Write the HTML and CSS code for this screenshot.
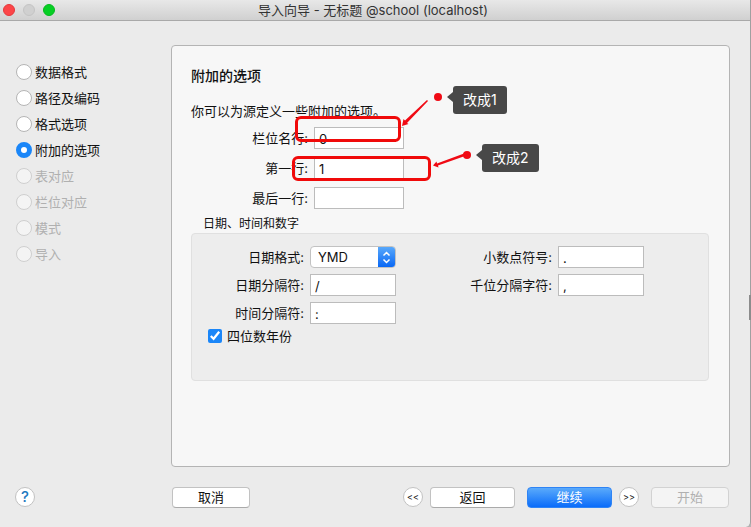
FILE: index.html
```html
<!DOCTYPE html>
<html lang="zh-CN">
<head>
    <meta charset="utf-8">
    <title>导入向导</title>
    <link rel="stylesheet" href="styles.css">
</head>
<body>
<div class="window">

    <!-- Title bar -->
    <header class="titlebar">
        <div class="lights">
            <button class="light red" aria-label="关闭"></button>
            <button class="light gray" aria-label="最小化"></button>
            <button class="light green" aria-label="缩放"></button>
        </div>
        <span class="title">导入向导 - 无标题 @school (localhost)</span>
    </header>

    <main class="main">
        <!-- Wizard steps -->
        <nav class="steps">
            <label class="step"><input type="radio" name="step">数据格式</label>
            <label class="step"><input type="radio" name="step">路径及编码</label>
            <label class="step"><input type="radio" name="step">格式选项</label>
            <label class="step"><input type="radio" name="step" checked>附加的选项</label>
            <label class="step off"><input type="radio" name="step" disabled>表对应</label>
            <label class="step off"><input type="radio" name="step" disabled>栏位对应</label>
            <label class="step off"><input type="radio" name="step" disabled>模式</label>
            <label class="step off"><input type="radio" name="step" disabled>导入</label>
        </nav>

        <section class="panel">
            <h1>附加的选项</h1>
            <p class="intro">你可以为源定义一些附加的选项。</p>

            <div class="rows">
                <label for="field-row">栏位名行:</label>
                <input type="text" id="field-row" value="0">
                <label for="first-row">第一行:</label>
                <input type="text" id="first-row" value="1">
                <label for="last-row">最后一行:</label>
                <input type="text" id="last-row">
            </div>

            <h2>日期、时间和数字</h2>
            <div class="group">
                <div class="columns">
                    <div class="formats">
                        <label for="date-format">日期格式:</label>
                        <div class="select">
                            <select id="date-format">
                                <option>YMD</option>
                                <option>MDY</option>
                                <option>DMY</option>
                            </select>
                            <span class="arrows">
                                <svg width="9" height="13" viewBox="0 0 9 13"><path d="M1.5 4.5l3-3 3 3M1.5 8.5l3 3 3-3"/></svg>
                            </span>
                        </div>
                        <label for="date-sep">日期分隔符:</label>
                        <input type="text" id="date-sep" value="/">
                        <label for="time-sep">时间分隔符:</label>
                        <input type="text" id="time-sep" value=":">
                    </div>
                    <div class="formats">
                        <label for="decimal">小数点符号:</label>
                        <input type="text" id="decimal" value=".">
                        <label for="thousand">千位分隔字符:</label>
                        <input type="text" id="thousand" value=",">
                    </div>
                </div>
                <label class="check"><input type="checkbox" checked>四位数年份</label>
            </div>

            <!-- Notes drawn over the form -->
            <div class="mark mark-one"></div>
            <div class="mark mark-two"></div>
            <svg class="pointers" width="120" height="90" viewBox="0 0 120 90">
                <path d="M37 10L38 11L17 33L18.500 34L12 36L13.500 29L15 30.500Z"/>
                <circle cx="48" cy="7" r="4"/>
                <path d="M74 63.500L75 66L48 75.500L48.500 77.500L43 75.500L46.500 71.500L47 73.500Z"/>
                <circle cx="77" cy="65" r="4"/>
            </svg>
            <div class="note note-one">改成1</div>
            <div class="note note-two">改成2</div>
        </section>
    </main>

    <footer class="footer">
        <div class="help-area"><button class="round help">?</button></div>
        <button class="btn cancel">取消</button>
        <div class="actions">
            <button class="round">&lt;&lt;</button>
            <button class="btn back">返回</button>
            <button class="btn primary">继续</button>
            <button class="round">&gt;&gt;</button>
            <button class="btn start" disabled>开始</button>
        </div>
    </footer>
    <span class="edge-handle"></span>
</div>
</body>
</html>
```

FILE: styles.css
```css
* {
    box-sizing: border-box;
}
body {
    margin: 0;
    background: #b4b4b4;
    color: #111;
    font-family: Inter, "Noto Sans CJK SC", sans-serif;
    font-size: 13px;
    line-height: 20px;
}
input, select, button {
    margin: 0;
    font: inherit;
    color: inherit;
}
.window {
    position: relative;
    display: flex;
    flex-direction: column;
    min-height: 100vh;
    background: #ebebeb;
    border-right: 1px solid #a0a0a0;
    border-bottom-right-radius: 5px;
}
.edge-handle {
    position: absolute;
    top: 56%;
    right: -1px;
    width: 2px;
    height: 25px;
    background: #8c8c8c;
}

/* title bar */
.titlebar {
    display: flex;
    align-items: center;
    height: 21px;
    padding-right: 7px;
    background: linear-gradient(#e8e8e8, #d0d0d0);
    border-bottom: 1px solid #a9a9a9;
}
.lights {
    display: flex;
    flex: 1;
    gap: 8px;
    padding-left: 3px;
}
.light {
    width: 12px;
    height: 12px;
    padding: 0;
    border: 1px solid #c4c4c4;
    border-radius: 50%;
    background: #d0d0d0;
}
.light.red {
    background: #fc4548;
    border-color: #e4383b;
}
.light.green {
    background: #06cf24;
    border-color: #05b91e;
}
.title {
    color: #333;
}
.titlebar::after {
    content: "";
    flex: 1;
}

/* steps */
.main {
    display: flex;
    flex: 1;
    padding: 24px 20px 0 16px;
}
.steps {
    display: flex;
    flex-direction: column;
    width: 155px;
    padding-top: 14px;
}
.step {
    display: flex;
    align-items: center;
    gap: 3px;
    height: 26px;
}
.step input {
    appearance: none;
    width: 16px;
    height: 16px;
    border: 1px solid #b5b5b5;
    border-radius: 50%;
    background: #fff;
}
.step input:checked {
    border: 5px solid #1a86f8;
}
.step.off {
    color: #b0b0b0;
}
.step.off input {
    border-color: #cfcfcf;
    background: #f4f4f4;
}

/* panel */
.panel {
    position: relative;
    flex: 1;
    padding: 20px 20px 0 19px;
    background: #f7f7f7;
    border: 1px solid #b4b4b4;
    border-radius: 4px;
}
h1 {
    margin: 0;
    font-size: 14px;
    font-weight: 500;
}
.intro {
    margin: 15px 0 6px;
}
.rows {
    display: grid;
    grid-template-columns: 117px 90px;
    gap: 8px 6px;
}
.rows label,
.formats label {
    line-height: 22px;
    text-align: right;
}
input[type="text"] {
    width: 100%;
    height: 22px;
    padding: 2px 4px 0;
    border: 1px solid #bcbcbc;
    background: #fff;
}
h2 {
    margin: 6px 0 0 12px;
    font-size: 12px;
    font-weight: 400;
    line-height: 18px;
}
.group {
    height: 148px;
    padding: 12px 16px 0;
    background: #ededed;
    border: 1px solid #e0e0e0;
    border-radius: 4px;
}
.columns {
    display: flex;
    gap: 60px;
}
.formats {
    display: grid;
    grid-template-columns: 96px 86px;
    grid-auto-rows: 22px;
    gap: 6px;
}

/* drop-down */
.select {
    display: flex;
    overflow: hidden;
    border: 1px solid #c2c2c2;
    border-radius: 4px;
    background: #fff;
}
.select select {
    appearance: none;
    flex: 1;
    min-width: 0;
    padding: 0 7px;
    border: 0;
    background: none;
}
.arrows {
    display: flex;
    align-items: center;
    justify-content: center;
    width: 17px;
    background: linear-gradient(#58a8fb, #0a68f5);
    pointer-events: none;
}
.arrows svg {
    fill: none;
    stroke: #fff;
    stroke-width: 1.5;
}
.check {
    display: flex;
    align-items: center;
    gap: 5px;
    margin-top: 2px;
}
.check input {
    width: 14px;
    height: 14px;
    accent-color: #1a86f8;
}

/* notes over the form */
.mark {
    position: absolute;
    border: 3px solid #f00a0a;
    border-radius: 6px;
    pointer-events: none;
}
.mark-one {
    top: 70px;
    left: 123px;
    width: 106px;
    height: 26px;
}
.mark-two {
    top: 110px;
    left: 120px;
    width: 139px;
    height: 25px;
}
.pointers {
    position: absolute;
    top: 44px;
    left: 218px;
    fill: #f00a14;
    pointer-events: none;
}
.note {
    position: absolute;
    height: 28px;
    padding: 0 10px;
    border-radius: 3px;
    background: #484848;
    color: #fff;
    font-size: 14px;
    line-height: 28px;
}
.note::before {
    content: "";
    position: absolute;
    top: 6px;
    left: -6px;
    border: 5px solid transparent;
    border-left: 0;
    border-right: 6px solid #484848;
}
.note-one {
    top: 40px;
    left: 281px;
}
.note-two {
    top: 98px;
    left: 310px;
}

/* footer */
.footer {
    display: flex;
    align-items: center;
    height: 60px;
    padding: 0 21px 0 15px;
}
.help-area {
    width: 157px;
}
.btn {
    height: 21px;
    padding: 0;
    border: 1px solid #c2c2c2;
    border-bottom-color: #aaa;
    border-radius: 4px;
    background: #fff;
    line-height: 18px;
}
.cancel,
.start {
    width: 78px;
}
.back,
.primary {
    width: 85px;
}
.actions {
    display: flex;
    gap: 7px;
    margin-left: auto;
}
.primary {
    margin-left: 5px;
    border-color: #2f84f5;
    background: linear-gradient(#5aaafb, #0a6cfa);
    color: #fff;
}
.start {
    margin-left: 5px;
    border-color: #d2d2d2;
    background: #f4f4f4;
    color: #b0b0b0;
}
.round {
    width: 20px;
    height: 20px;
    padding: 0;
    border: 1px solid #c2c2c2;
    border-radius: 50%;
    background: #fff;
    font-size: 9px;
    line-height: 18px;
}
.help {
    color: #2279c0;
    font-size: 15px;
    font-weight: 500;
}
```
